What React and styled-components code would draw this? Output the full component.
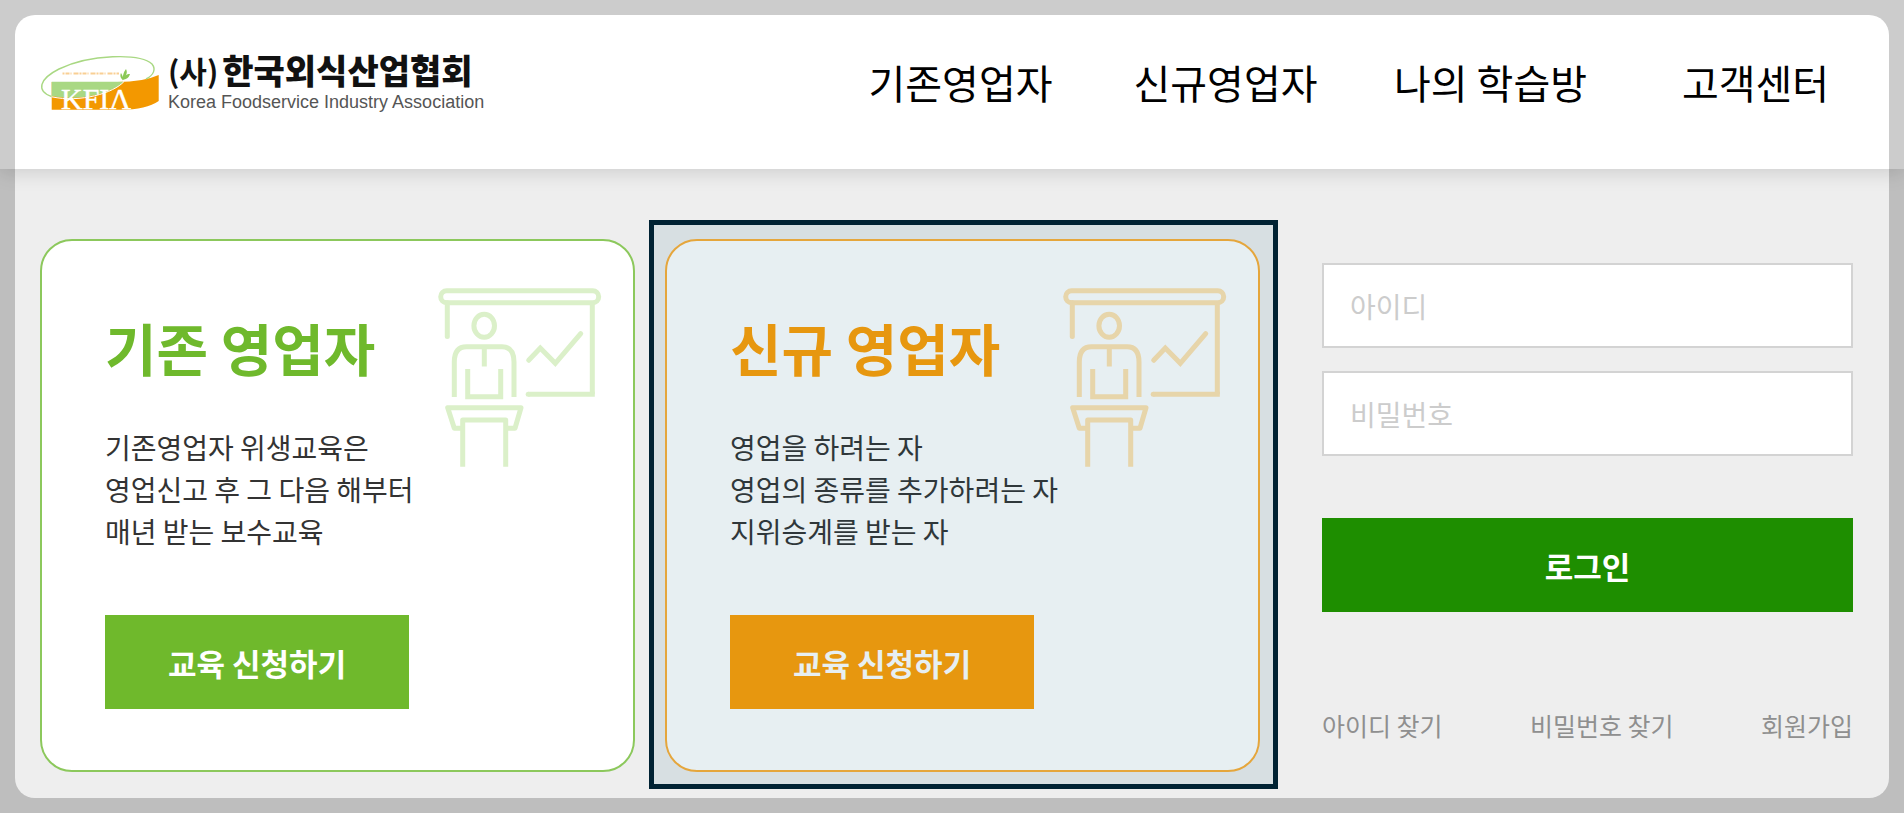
import React from "react";
import styled, { createGlobalStyle } from "styled-components";

const menus = ["기존영업자", "신규영업자", "나의 학습방", "고객센터"];

const courses = [
  {
    title: "기존 영업자",
    lines: ["기존영업자 위생교육은", "영업신고 후 그 다음 해부터", "매년 받는 보수교육"],
    color: "#6fb92c",
    border: "#8cc85c",
    iconColor: "#dbf0c9",
    selected: false
  },
  {
    title: "신규 영업자",
    lines: ["영업을 하려는 자", "영업의 종류를 추가하려는 자", "지위승계를 받는 자"],
    color: "#ff9d03",
    border: "#fdae35",
    iconColor: "#ffe2af",
    selected: true
  }
];

const LectureIcon = ({ color }) => (
  <svg
    width="164"
    height="180"
    viewBox="0 0 164 180"
    fill="none"
    stroke={color}
    strokeWidth="5"
    aria-hidden="true"
  >
    <rect x="2.7" y="2.7" width="158" height="12" rx="6" />
    <path d="M9.3 14.7V48.5" strokeLinecap="round" />
    <path d="M154.3 14.7V106.3" />
    <path d="M156.8 106.3H90.2" />
    <circle cx="90.2" cy="106.3" r="2.5" fill={color} stroke="none" />
    <ellipse cx="46.2" cy="37.7" rx="10.3" ry="11.5" />
    <path d="M16.3 109V74Q16.3 58.7 28.5 58.7H64Q76 58.7 76 74V109" />
    <path d="M46.3 58.7V78.5" />
    <path d="M29.7 81V108.7H62.7V81" />
    <path d="M90.7 72.3L102.3 60L117.3 75.3L142.7 45.7" strokeLinecap="round" />
    <path
      d="M24.7 140.3H16.3L9.7 119.7H83L77 140.3H67.7"
      strokeLinejoin="round"
    />
    <path d="M24.7 178.7V132H67.7V178.7" strokeLinejoin="round" />
  </svg>
);

const Emblem = () => (
  <EmblemSvg width="120" height="56" viewBox="0 0 120 56" aria-hidden="true">
    <path
      d="M11.7 26V53.7H79Q106 54 118.7 45V19Q102 26.5 74 26Z"
      fill="#f39800"
    />
    <path d="M11.7 25.7H83.5C75 36 40 46 11.7 40Z" fill="#a9d883" />
    <path
      d="M11.7 40.6C-4 35 -1 23 19 13C50 -2 100 -3 112 8C116 13 114 19 106 23"
      fill="none"
      stroke="#a9d883"
      strokeWidth="1.4"
    />
    <path
      d="M11.7 40.8C40 47 74 37 84 25.5"
      fill="none"
      stroke="#fff"
      strokeWidth="1"
    />
    <path
      d="M22.5 17.5H79"
      stroke="#f9cf94"
      strokeWidth="1.8"
      strokeDasharray="2 1 4 1 1 2 5 1"
    />
    <path
      d="M82 25C83 20 83 17 86 13C88 17 86 19 84 22C86 18 88 18 90 18C89 22 86 23 83 24C80 22 80 19 81 17C83 20 83 22 82 25Z"
      fill="#8bc957"
    />
    <text
      x="21"
      y="53"
      fontFamily="Liberation Serif, serif"
      fontSize="30"
      fill="#fff"
      stroke="#fff"
      strokeWidth="0.4"
    >
      KFIΛ
    </text>
  </EmblemSvg>
);

export default function App() {
  return (
    <Page>
      <GlobalStyle />
      <Header>
        <Logo href="#">
          <Emblem />
          <LogoText>
            <LogoKorean>
              <LogoPrefix>(사)</LogoPrefix>
              한국외식산업협회
            </LogoKorean>
            <LogoEnglish>Korea Foodservice Industry Association</LogoEnglish>
          </LogoText>
        </Logo>
        <Nav>
          {menus.map(menu => (
            <NavLink href="#" key={menu}>
              {menu}
            </NavLink>
          ))}
        </Nav>
      </Header>
      <Main>
        {courses.map(course => (
          <Card
            key={course.title}
            $border={course.border}
            $selected={course.selected}
          >
            <CardTitle $color={course.color}>{course.title}</CardTitle>
            <CardIcon>
              <LectureIcon color={course.iconColor} />
            </CardIcon>
            <CardText>
              {course.lines.map(line => (
                <span key={line}>{line}</span>
              ))}
            </CardText>
            <ApplyButton $color={course.color}>교육 신청하기</ApplyButton>
          </Card>
        ))}
        <Login onSubmit={e => e.preventDefault()}>
          <Field type="text" placeholder="아이디" aria-label="아이디" />
          <Field type="password" placeholder="비밀번호" aria-label="비밀번호" />
          <LoginButton type="submit">로그인</LoginButton>
          <Links>
            <a href="#">아이디 찾기</a>
            <a href="#">비밀번호 찾기</a>
            <a href="#">회원가입</a>
          </Links>
        </Login>
      </Main>
      <Spotlight />
    </Page>
  );
}

const GlobalStyle = createGlobalStyle`
  * {
    box-sizing: border-box;
  }
  body {
    margin: 0;
    background: #eee;
    font-family: "Noto Sans CJK KR", sans-serif;
  }
  a {
    color: inherit;
    text-decoration: none;
  }
  button, input {
    font-family: inherit;
  }
`;

const Page = styled.div`
  min-height: 100vh;
`;

const Header = styled.header`
  display: flex;
  justify-content: space-between;
  align-items: flex-start;
  padding: 54px 16px 55px 40px;
  background: #fff;
  box-shadow: 0 2px 20px rgba(0, 0, 0, 0.16);
`;

const Logo = styled.a`
  display: flex;
  align-items: center;
  gap: 8px;
  white-space: nowrap;
`;

const EmblemSvg = styled.svg`
  overflow: visible;
`;

const LogoText = styled.span`
  display: flex;
  flex-direction: column;
  gap: 4px;
`;

const LogoKorean = styled.strong`
  display: flex;
  align-items: center;
  gap: 4px;
  font-size: 34px;
  line-height: 32px;
  font-weight: 900;
  color: #111;
`;

const LogoPrefix = styled.span`
  font-size: 30px;
  font-weight: bold;
`;

const LogoEnglish = styled.span`
  font-family: "Liberation Sans", sans-serif;
  font-size: 18px;
  line-height: 24px;
  color: #555;
`;

const Nav = styled.nav`
  display: flex;
  flex: 0 1 1060px;
`;

const NavLink = styled.a`
  flex: 1;
  text-align: center;
  font-size: 40px;
  line-height: 56px;
  color: #000;
  white-space: nowrap;
`;

const Main = styled.main`
  display: grid;
  grid-template-columns: 595fr 595fr 563fr;
  gap: 30px;
  align-items: start;
  padding: 70px 51px 40px 40px;
`;

const Card = styled.section`
  position: relative;
  display: grid;
  grid-template-columns: 1fr auto;
  justify-items: start;
  padding: 47px 31px 61px 63px;
  border: 2px solid ${props => props.$border};
  border-radius: 32px;
  background: #fff;

  &::after {
    content: "";
    display: ${props => (props.$selected ? "block" : "none")};
    position: absolute;
    inset: -21px -20px -19px -18px;
    border: 5px solid #002233;
    background: rgba(15, 95, 125, 0.1);
    pointer-events: none;
  }
`;

const CardTitle = styled.h2`
  margin: 0;
  padding-top: 19px;
  font-size: 56px;
  line-height: 80px;
  font-weight: bold;
  color: ${props => props.$color};
  white-space: nowrap;
`;

const CardIcon = styled.div`
  grid-column: 2;
  grid-row: 1 / span 2;
`;

const CardText = styled.p`
  display: flex;
  flex-direction: column;
  margin: 39px 0 0;
  font-size: 28px;
  line-height: 42px;
  color: #333;
  white-space: nowrap;
`;

const Button = styled.button`
  height: 94px;
  padding: 0 63px;
  border: none;
  font-size: 31px;
  font-weight: bold;
  color: #fff;
  background: ${props => props.$color};
  white-space: nowrap;
`;

const ApplyButton = styled(Button)`
  margin-top: 63px;
`;

const Login = styled.form`
  display: flex;
  flex-direction: column;
  padding: 24px 0 0 32px;
`;

const Field = styled.input`
  width: 100%;
  height: 85px;
  margin-bottom: 23px;
  padding: 0 26px;
  border: 2px solid #d3d3d3;
  background: #fff;
  font-size: 28px;
  color: #333;

  &::placeholder {
    color: #ccc;
  }
`;

const LoginButton = styled(Button)`
  margin-top: 39px;
  background: #1e8e00;
`;

const Links = styled.div`
  display: flex;
  justify-content: space-between;
  margin-top: 95px;
  font-size: 25px;
  line-height: 36px;
  color: #8f8f8f;
  white-space: nowrap;
`;

/* dims everything around the rounded window */
const Spotlight = styled.div`
  position: fixed;
  inset: 15px;
  border-radius: 20px;
  box-shadow: 0 0 0 40px rgba(0, 0, 0, 0.2);
  pointer-events: none;
`;
